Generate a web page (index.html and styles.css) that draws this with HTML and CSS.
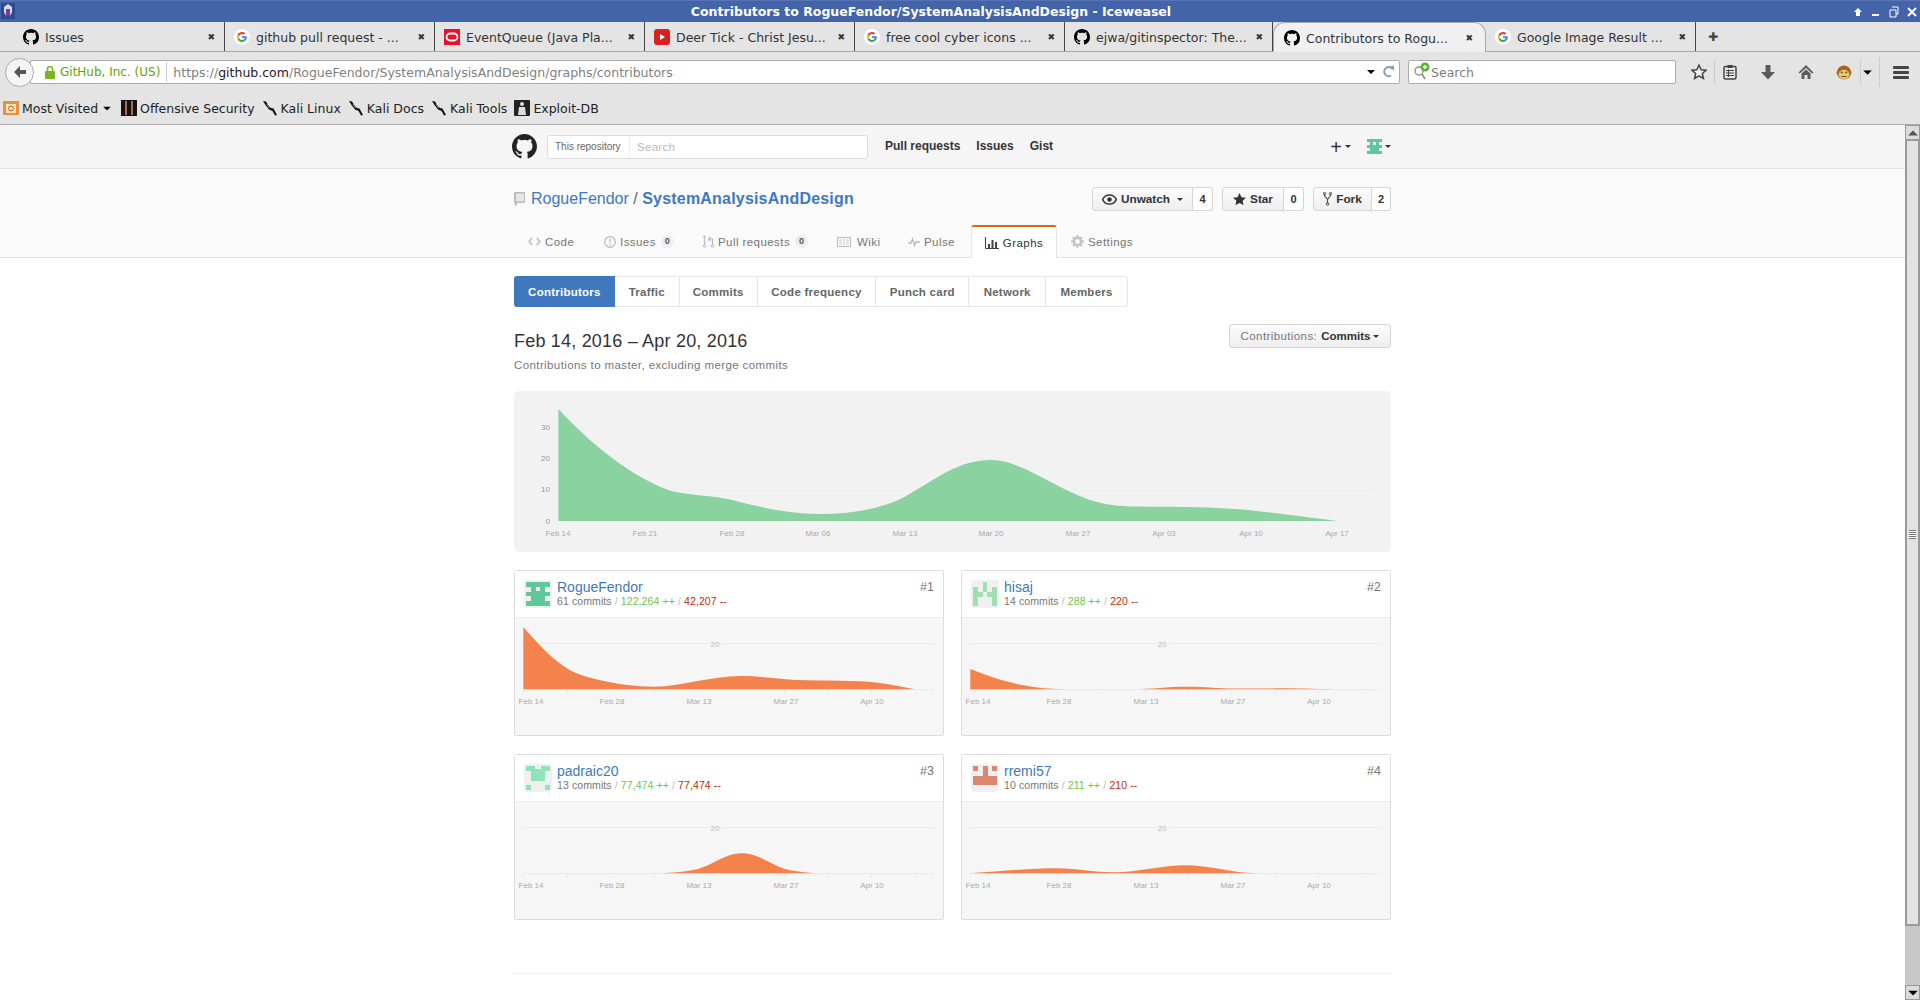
FILE: index.html
```html
<!DOCTYPE html>
<html lang="en">
<head>
  <meta charset="UTF-8">
  <title>Contributors to RogueFendor/SystemAnalysisAndDesign</title>
  <link rel="stylesheet" href="styles.css">
</head>
<body>
  <svg class="defs" width="0" height="0">
    <symbol id="gh" viewBox="0 0 16 16"><path d="M8 0C3.58 0 0 3.58 0 8c0 3.54 2.29 6.53 5.47 7.59.4.07.55-.17.55-.38 0-.19-.01-.82-.01-1.49-2.01.37-2.53-.49-2.69-.94-.09-.23-.48-.94-.82-1.13-.28-.15-.68-.52-.01-.53.63-.01 1.08.58 1.23.82.72 1.21 1.87.87 2.33.66.07-.52.28-.87.51-1.07-1.78-.2-3.64-.89-3.64-3.95 0-.87.31-1.59.82-2.15-.08-.2-.36-1.02.08-2.12 0 0 .67-.21 2.2.82.64-.18 1.32-.27 2-.27.68 0 1.36.09 2 .27 1.53-1.04 2.2-.82 2.2-.82.44 1.1.16 1.92.08 2.12.51.56.82 1.27.82 2.15 0 3.07-1.87 3.75-3.65 3.95.29.25.54.73.54 1.48 0 1.07-.01 1.93-.01 2.2 0 .21.15.46.55.38A8.013 8.013 0 0016 8c0-4.42-3.58-8-8-8z"/></symbol>
    <symbol id="goog" viewBox="0 0 16 16">
      <circle cx="8" cy="8" r="8" fill="#fff"/>
      <path d="M12.8 8.2c0-.4 0-.7-.1-1H8v1.9h2.7c-.1.6-.5 1.200-1 1.500l1.600 1.200c.9-.9 1.500-2.100 1.500-3.600z" fill="#4285f4"/>
      <path d="M8 13c1.300 0 2.400-.4 3.300-1.200l-1.600-1.200c-.4.3-1 .5-1.700.5-1.300 0-2.400-.9-2.800-2L3.500 10.300C4.300 11.900 6 13 8 13z" fill="#34a853"/>
      <path d="M5.200 9.100c-.2-.7-.2-1.500 0-2.200L3.500 5.700c-.7 1.400-.7 3.200 0 4.600z" fill="#fbbc05"/>
      <path d="M8 5c.7 0 1.400.3 1.900.7l1.400-1.400C10.400 3.500 9.300 3 8 3 6 3 4.300 4.100 3.500 5.700l1.700 1.200C5.600 5.800 6.700 5 8 5z" fill="#ea4335"/>
    </symbol>
    <symbol id="kali" viewBox="0 0 16 16"><path d="M1 1l3 .5 2.500 4L9 8l2.500.5L15 15l-2 .5-2.500-4.500L7 9.500 3.500 5z" fill="#111"/><path d="M5 4l2.500 4" stroke="#999" fill="none"/></symbol>
    <symbol id="caret" viewBox="0 0 8 4"><path d="M0 0h8L4 4z"/></symbol>
  </svg>

  <!-- Window title -->
  <div class="titlebar">
    <svg class="title-icon" width="14" height="18" viewBox="0 0 14 18"><rect y="1" width="14" height="16" fill="#2f4a93"/><path d="M3 5l4-3 4 3v5l-2 4H5L3 10z" fill="#d9dcea"/><rect x="5" y="7" width="4" height="7" fill="#7a3b8f"/></svg>
    <span class="title-text">Contributors to RogueFendor/SystemAnalysisAndDesign - Iceweasel</span>
    <div class="win-btns">
      <svg width="10" height="10" viewBox="0 0 10 10"><path d="M5 1l4 4H7v4H3V5H1z" fill="#fff"/></svg>
      <svg width="10" height="10" viewBox="0 0 10 10"><rect x="1" y="7" width="7" height="2" fill="#fff"/></svg>
      <svg width="10" height="12" viewBox="0 0 10 12"><path d="M3 1h6v7H7M1 4h6v7H1z" fill="none" stroke="#fff"/></svg>
      <svg width="10" height="10" viewBox="0 0 10 10"><path d="M1 1l8 8M9 1l-8 8" stroke="#fff" stroke-width="2"/></svg>
    </div>
  </div>

  <!-- Browser tabs -->
  <div class="tabs">
    <div class="tab tab-first"><svg class="fav" viewBox="0 0 16 16"><use href="#gh"/></svg><span class="tab-label">Issues</span><span class="tab-x">✖</span></div>
    <div class="tab"><svg class="fav" viewBox="0 0 16 16"><use href="#goog"/></svg><span class="tab-label">github pull request - ...</span><span class="tab-x">✖</span></div>
    <div class="tab"><svg class="fav" viewBox="0 0 16 16"><rect width="16" height="16" fill="#e8102a"/><rect x="2.500" y="4.500" width="11" height="7" rx="3.500" fill="none" stroke="#fff" stroke-width="1.800"/></svg><span class="tab-label">EventQueue (Java Pla...</span><span class="tab-x">✖</span></div>
    <div class="tab"><svg class="fav" viewBox="0 0 16 16"><rect width="16" height="16" rx="3" fill="#d9201f"/><path d="M6 5l5 3-5 3z" fill="#fff"/></svg><span class="tab-label">Deer Tick - Christ Jesu...</span><span class="tab-x">✖</span></div>
    <div class="tab"><svg class="fav" viewBox="0 0 16 16"><use href="#goog"/></svg><span class="tab-label">free cool cyber icons ...</span><span class="tab-x">✖</span></div>
    <div class="tab tab-short"><svg class="fav" viewBox="0 0 16 16"><use href="#gh"/></svg><span class="tab-label">ejwa/gitinspector: The...</span><span class="tab-x">✖</span></div>
    <div class="tab tab-active"><svg class="fav" viewBox="0 0 16 16"><use href="#gh"/></svg><span class="tab-label">Contributors to Rogu...</span><span class="tab-x">✖</span></div>
    <div class="tab"><svg class="fav" viewBox="0 0 16 16"><use href="#goog"/></svg><span class="tab-label">Google Image Result ...</span><span class="tab-x">✖</span></div>
    <span class="tab-new">✚</span>
  </div>

  <!-- Navigation bar -->
  <div class="navbar">
    <div class="back"><svg width="16" height="16" viewBox="0 0 16 16"><path d="M8 2L2 8l6 6V10h6V6H8z" fill="#555"/></svg></div>
    <div class="urlbar">
      <svg class="lock" width="10" height="14" viewBox="0 0 10 14"><path d="M2.500 6V4a2.500 2.500 0 015 0v2" fill="none" stroke="#7ab51d" stroke-width="1.500"/><rect y="6" width="10" height="8" rx="1" fill="#7ab51d"/></svg>
      <span class="url-id">GitHub, Inc. (US)</span>
      <span class="url-text">https://<b>github.com</b>/RogueFendor/SystemAnalysisAndDesign/graphs/contributors</span>
      <svg class="url-caret" width="8" height="6" viewBox="0 0 8 4"><use href="#caret"/></svg>
      <svg width="12" height="14" viewBox="0 0 12 14"><path d="M9.500 4A4.500 4.500 0 108 10.500" fill="none" stroke="#8b9bb0" stroke-width="2"/><path d="M7 1h4v5z" fill="#8b9bb0"/></svg>
    </div>
    <div class="searchbar">
      <svg width="18" height="20" viewBox="0 0 18 20"><circle cx="6" cy="9" r="4" fill="none" stroke="#888" stroke-width="1.300"/><path d="M9 12l3 5" stroke="#888" stroke-width="1.500"/><circle cx="12" cy="5" r="4.500" fill="#5cb531"/><path d="M12 3v4M10 5h4" stroke="#fff" stroke-width="1.300"/></svg>
      <span>Search</span>
    </div>
    <div class="nav-icons">
      <svg class="ni-star" width="16" height="18" viewBox="0 0 16 16"><path d="M8 1l2.100 4.700 5 .5-3.800 3.300 1.100 5L8 11.900 3.600 14.500l1.100-5L.9 6.200l5-.5z" fill="#f2f2f2" stroke="#444" stroke-width="1.500"/></svg>
      <span class="ni-sep ni-sep-1"></span>
      <svg class="ni-clip" width="14" height="16" viewBox="0 0 14 16"><rect x="1" y="2.500" width="12" height="12.500" rx="1.500" fill="#e8e8e8" stroke="#444" stroke-width="1.500"/><rect x="4.500" y="1" width="5" height="3" fill="#444"/><path d="M3 6.500h8M3 9h8M3 11.500h8M5.500 5.500v7.500" stroke="#444" stroke-width="1.100"/></svg>
      <svg class="ni-down" width="14" height="16" viewBox="0 0 14 16"><path d="M4.500 1h5v7H14l-7 7.500L0 8h4.500z" fill="#5c5c5c"/></svg>
      <svg class="ni-home" width="16" height="16" viewBox="0 0 16 16"><path d="M8 1L.5 8.500l1.300 1L8 4l6.200 5.500 1.300-1z" fill="#5c5c5c"/><path d="M3.500 9.500L8 5.500l4.500 4V15H9.500v-4h-3v4h-3z" fill="#5c5c5c"/></svg>
      <svg class="ni-monkey" width="16" height="16" viewBox="0 0 16 16"><circle cx="1.800" cy="9" r="1.800" fill="#e0a050"/><circle cx="14.200" cy="9" r="1.800" fill="#e0a050"/><circle cx="8" cy="8.500" r="7" fill="#a8641f"/><ellipse cx="8" cy="10.500" rx="5.300" ry="4.700" fill="#f2c274"/><circle cx="5.800" cy="8.500" r="1.100" fill="#4d7a2a"/><circle cx="10.200" cy="8.500" r="1.100" fill="#4d7a2a"/><path d="M5.500 12.500h5" stroke="#6a4314"/></svg>
      <span class="ni-sep ni-sep-2"></span>
      <svg class="ni-caret" width="9" height="5" viewBox="0 0 8 4"><use href="#caret"/></svg>
      <span class="ni-sep ni-sep-3"></span>
      <svg class="ni-menu" width="16" height="13" viewBox="0 0 16 13"><rect width="16" height="3" rx="1" fill="#444"/><rect y="5" width="16" height="3" rx="1" fill="#444"/><rect y="10" width="16" height="3" rx="1" fill="#444"/></svg>
    </div>
  </div>

  <!-- Bookmarks -->
  <div class="bookmarks">
    <span class="bm"><svg class="bm-icon" viewBox="0 0 16 16"><rect y="1" width="16" height="14" fill="#e8913a"/><rect x="3" y="4" width="10" height="9" fill="#fbe3bf"/><circle cx="8" cy="8.500" r="2.500" fill="none" stroke="#b5651d"/></svg>Most Visited<svg class="bm-caret" width="8" height="5" viewBox="0 0 8 4"><use href="#caret"/></svg></span>
    <span class="bm"><svg class="bm-icon" viewBox="0 0 16 16"><rect width="16" height="16" fill="#1a1210"/><path d="M5 1v14M11 1v14" stroke="#a0705a" stroke-width="2"/></svg>Offensive Security</span>
    <span class="bm"><svg class="bm-icon" viewBox="0 0 16 16"><use href="#kali"/></svg>Kali Linux</span>
    <span class="bm"><svg class="bm-icon" viewBox="0 0 16 16"><use href="#kali"/></svg>Kali Docs</span>
    <span class="bm"><svg class="bm-icon" viewBox="0 0 16 16"><use href="#kali"/></svg>Kali Tools</span>
    <span class="bm"><svg class="bm-icon" viewBox="0 0 16 16"><rect width="16" height="16" rx="1" fill="#222"/><circle cx="8" cy="4" r="2" fill="#ddd"/><path d="M5 7h6l1 8H4z" fill="#ddd"/></svg>Exploit-DB</span>
  </div>

  <div class="viewport">
    <div class="page">
      <!-- GitHub header -->
      <header class="gh-header">
        <div class="wrap gh-row">
          <svg class="gh-logo" viewBox="0 0 16 16"><use href="#gh"/></svg>
          <div class="gh-search"><span class="gh-scope">This repository</span><span class="gh-ph">Search</span></div>
          <nav class="gh-nav"><a>Pull requests</a><a>Issues</a><a>Gist</a></nav>
          <div class="gh-user">
            <span class="gh-plus">+</span><svg class="mini-caret" width="6" height="3" viewBox="0 0 8 4"><use href="#caret"/></svg>
            <svg class="gh-ava" width="16" height="15" viewBox="0 0 5 5" shape-rendering="crispEdges"><path d="M0 0h5v1H4v1h1v1H4v1h1v1H0V4h1V3H0V2h1V1H0z" fill="#5fc79b"/><rect x="2" y="1" width="1" height="1" fill="#f0f0f0"/></svg>
            <svg class="mini-caret" width="6" height="3" viewBox="0 0 8 4"><use href="#caret"/></svg>
          </div>
        </div>
      </header>

      <!-- Repository head -->
      <div class="repohead">
        <div class="wrap">
          <div class="repo-row">
            <h1 class="repo-title">
              <svg class="repo-icon" width="11" height="14" viewBox="0 0 11 14"><path d="M1 0h10v11H3v3l-1-1-1 1v-3H0V1z" fill="#bbb"/><rect x="2" y="1.500" width="8" height="8" fill="#e6e6e6"/></svg>
              <a>RogueFendor</a><span class="slash"> / </span><a class="repo-name">SystemAnalysisAndDesign</a>
            </h1>
            <div class="repo-actions">
              <span class="btn-group"><span class="rbtn rbtn-w"><svg width="15" height="11" viewBox="0 0 16 12"><path d="M8 1C4 1 1.500 4 .5 6c1 2 3.500 5 7.500 5s6.500-3 7.500-5C14.500 4 12 1 8 1z" fill="none" stroke="#333" stroke-width="1.600"/><circle cx="8" cy="6" r="2.500" fill="#333"/></svg>Unwatch<svg class="mini-caret" width="6" height="3" viewBox="0 0 8 4"><use href="#caret"/></svg></span><span class="rcount rcount-w">4</span></span>
              <span class="btn-group"><span class="rbtn rbtn-s"><svg width="13" height="12" viewBox="0 0 14 13"><path d="M7 0l2.100 4.500 4.900.6-3.600 3.300 1 4.800L7 10.800 2.600 13.200l1-4.800L0 5.100l4.900-.6z" fill="#333"/></svg>Star</span><span class="rcount rcount-s">0</span></span>
              <span class="btn-group"><span class="rbtn rbtn-f"><svg width="9" height="14" viewBox="0 0 9 14"><path d="M1.500 1.500v2l3 4v4M7.500 1.500v2l-3 4" fill="none" stroke="#555" stroke-width="1.200"/><circle cx="1.500" cy="1.500" r="1.200" fill="none" stroke="#555"/><circle cx="7.500" cy="1.500" r="1.200" fill="none" stroke="#555"/><circle cx="4.500" cy="12" r="1.300" fill="none" stroke="#555"/></svg>Fork</span><span class="rcount rcount-f">2</span></span>
            </div>
          </div>
          <nav class="repo-tabs">
            <a class="rt rt-code"><svg width="13" height="9" viewBox="0 0 14 10"><path d="M4.500 1L1 5l3.500 4M9.500 1L13 5 9.500 9" fill="none" stroke="#bbb" stroke-width="1.600"/></svg>Code</a>
            <a class="rt rt-issues"><svg width="12" height="12" viewBox="0 0 12 12"><circle cx="6" cy="6" r="5.300" fill="none" stroke="#bbb" stroke-width="1.200"/><path d="M6 2.800v4M6 8v1.400" stroke="#bbb" stroke-width="1.300"/></svg>Issues<span class="badge">0</span></a>
            <a class="rt rt-pulls"><svg width="11" height="13" viewBox="0 0 11 13"><path d="M1.500 3v7M9.500 10V4H6M7.500 2L5.500 4l2 2" fill="none" stroke="#bbb" stroke-width="1.200"/><circle cx="1.500" cy="1.800" r="1.200" fill="#bbb"/><circle cx="1.500" cy="11" r="1.200" fill="none" stroke="#bbb"/><circle cx="9.500" cy="11" r="1.200" fill="none" stroke="#bbb"/></svg>Pull requests<span class="badge">0</span></a>
            <a class="rt rt-wiki"><svg width="14" height="10" viewBox="0 0 14 10"><rect x=".5" y=".5" width="13" height="9" fill="none" stroke="#bbb"/><path d="M7 .5v9M2 3h3M2 5h3M2 7h3M9 3h3M9 5h3M9 7h3" stroke="#ccc"/></svg>Wiki</a>
            <a class="rt rt-pulse"><svg width="12" height="10" viewBox="0 0 12 10"><path d="M0 6h3l1.500-4L6.500 8.500 8 5h4" fill="none" stroke="#bbb" stroke-width="1.300"/></svg>Pulse</a>
            <a class="rt rt-graphs rt-active"><svg width="14" height="12" viewBox="0 0 14 12"><path d="M.5 0v11.500H14" fill="none" stroke="#444"/><path d="M3 7h2v4H3zM6.500 3h2v8h-2zM10 5h2v6h-2z" fill="#444"/></svg>Graphs</a>
            <a class="rt rt-settings"><svg width="13" height="13" viewBox="0 0 13 13"><circle cx="6.500" cy="6.500" r="3.700" fill="none" stroke="#c4c4c4" stroke-width="2.600"/><path d="M6.500 0v3M6.500 10v3M0 6.500h3M10 6.500h3M2 2l2 2M9 9l2 2M11 2L9 4M4 9l-2 2" stroke="#c4c4c4" stroke-width="1.800"/></svg>Settings</a>
          </nav>
        </div>
      </div>

      <main class="wrap">
        <div class="subnav">
          <a class="sub sub-on sub-1">Contributors</a><a class="sub sub-2">Traffic</a><a class="sub sub-3">Commits</a><a class="sub sub-4">Code frequency</a><a class="sub sub-5">Punch card</a><a class="sub sub-6">Network</a><a class="sub sub-7">Members</a>
        </div>

        <div class="range-row">
          <div>
            <h2 class="range">Feb 14, 2016 – Apr 20, 2016</h2>
            <p class="range-sub">Contributions to master, excluding merge commits</p>
          </div>
          <div class="range-btn"><span class="range-lbl">Contributions:</span><b>Commits</b><svg class="mini-caret" width="6" height="3" viewBox="0 0 8 4"><use href="#caret"/></svg></div>
        </div>

        <!-- Overall chart -->
        <div class="chart-main">
          <svg width="877" height="161" viewBox="0 0 877 161">
            <g class="grid"><path d="M44 37h815M44 68h815M44 99h815M44 130h815"/></g>
            <g class="axis-y"><text x="36" y="39">30</text><text x="36" y="70">20</text><text x="36" y="101">10</text><text x="36" y="133">0</text></g>
            <path class="area-green" d="M44.400 130V18C72 48 110 80 146 95.700C165 105 195 103 218.300 109C245 116 275 123 304.400 123C335 123 365 119 391 105.700C425 86 445 69 477.200 69C510 69 545 102 588 112.300C605 116.500 630 115.500 650 115.700C680 116 710 116.500 736 119.300C765 122.500 800 127 822.800 130Z"/>
            <g class="axis-x">
              <text x="44" y="144.500">Feb 14</text><text x="131" y="144.500">Feb 21</text><text x="218" y="144.500">Feb 28</text><text x="304" y="144.500">Mar 06</text><text x="391" y="144.500">Mar 13</text><text x="477" y="144.500">Mar 20</text><text x="564" y="144.500">Mar 27</text><text x="650" y="144.500">Apr 03</text><text x="737" y="144.500">Apr 10</text><text x="823" y="144.500">Apr 17</text>
            </g>
          </svg>
        </div>

        <!-- Contributors -->
        <div class="people">
          <section class="person">
            <div class="person-head">
              <svg class="ava" viewBox="0 0 28 28" shape-rendering="crispEdges"><rect width="28" height="28" fill="#f0f0f0"/><path d="M2 2h24v5h-5v5h5v4h-5v5h5v5H2v-5h5v-5H2v-4h5V7H2z" fill="#5fc79b"/><rect x="12" y="7" width="4" height="4" fill="#f0f0f0"/></svg>
              <div class="person-info">
                <a class="person-name">RogueFendor</a>
                <div class="person-stat">61 commits <i>/</i> <span class="add">122,264 ++</span> <i>/</i> <span class="del">42,207 --</span></div>
              </div>
              <span class="rank">#1</span>
            </div>
            <svg class="mini" width="428" height="117" viewBox="0 0 428 117">
              <path class="mini-grid" d="M8 25.500H419M8 71.500H419M8.500 71V76M52.500 71V76M95.500 71V76M139.500 71V76M183.500 71V76M226.500 71V76M269.500 71V76M313.500 71V76M356.500 71V76M400.500 71V76"/>
              <rect x="193" y="20" width="14" height="10" fill="#f6f6f6"/>
              <text class="mini-20" x="200" y="28.500">20</text>
              <g class="mini-x"><text x="16" y="86">Feb 14</text><text x="97" y="86">Feb 28</text><text x="184" y="86">Mar 13</text><text x="271" y="86">Mar 27</text><text x="357" y="86">Apr 10</text></g>
              <path class="area-orange" d="M8.300 71.300V9.300C27 30 42 47 62 55.500C80 62 110 68.700 140 68.700C165 68.700 195 58 226.700 58C245 58 260 61 280 62C310 63 340 62 363 64.700C378 66.500 390 69.500 400 71.300Z"/>
            </svg>
          </section>
          <section class="person">
            <div class="person-head">
              <svg class="ava" viewBox="0 0 28 28" shape-rendering="crispEdges"><rect width="28" height="28" fill="#f0f0f0"/><path d="M2 7h5v5h5V2h4v10h5V7h5v19h-5V17h-5v-5h-4v5H7v9H2z" fill="#a0dfb0"/></svg>
              <div class="person-info">
                <a class="person-name">hisaj</a>
                <div class="person-stat">14 commits <i>/</i> <span class="add">288 ++</span> <i>/</i> <span class="del">220 --</span></div>
              </div>
              <span class="rank">#2</span>
            </div>
            <svg class="mini" width="428" height="117" viewBox="0 0 428 117">
              <path class="mini-grid" d="M8 25.500H419M8 71.500H419M8.500 71V76M52.500 71V76M95.500 71V76M139.500 71V76M183.500 71V76M226.500 71V76M269.500 71V76M313.500 71V76M356.500 71V76M400.500 71V76"/>
              <rect x="193" y="20" width="14" height="10" fill="#f6f6f6"/>
              <text class="mini-20" x="200" y="28.500">20</text>
              <g class="mini-x"><text x="16" y="86">Feb 14</text><text x="97" y="86">Feb 28</text><text x="184" y="86">Mar 13</text><text x="271" y="86">Mar 27</text><text x="357" y="86">Apr 10</text></g>
              <path class="area-orange" d="M8.300 71.300V51C25 58 45 64 60 67C75 70 90 71 105 71.300L170 71.300C190 71 205 68.700 226 68.700C245 68.700 255 70.600 275 70.600C295 70.600 310 70.300 325 70.300C340 70.300 360 71.200 380 71.300Z"/>
            </svg>
          </section>
          <section class="person">
            <div class="person-head">
              <svg class="ava" viewBox="0 0 28 28" shape-rendering="crispEdges"><rect width="28" height="28" fill="#f0f0f0"/><path d="M2 2h9v3h6V2h9v5h-5v10H7V7H2z" fill="#8fe3b8"/><rect x="2" y="21" width="5" height="5" fill="#8fe3b8"/><rect x="21" y="21" width="5" height="5" fill="#8fe3b8"/></svg>
              <div class="person-info">
                <a class="person-name">padraic20</a>
                <div class="person-stat">13 commits <i>/</i> <span class="add">77,474 ++</span> <i>/</i> <span class="del">77,474 --</span></div>
              </div>
              <span class="rank">#3</span>
            </div>
            <svg class="mini" width="428" height="117" viewBox="0 0 428 117">
              <path class="mini-grid" d="M8 25.500H419M8 71.500H419M8.500 71V76M52.500 71V76M95.500 71V76M139.500 71V76M183.500 71V76M226.500 71V76M269.500 71V76M313.500 71V76M356.500 71V76M400.500 71V76"/>
              <rect x="193" y="20" width="14" height="10" fill="#f6f6f6"/>
              <text class="mini-20" x="200" y="28.500">20</text>
              <g class="mini-x"><text x="16" y="86">Feb 14</text><text x="97" y="86">Feb 28</text><text x="184" y="86">Mar 13</text><text x="271" y="86">Mar 27</text><text x="357" y="86">Apr 10</text></g>
              <path class="area-orange" d="M140 71.300C160 71 170 69.500 183 67C200 62 210 51.300 226.700 51.300C243 51.300 255 62 270 67C282 70 295 71 305 71.300Z"/>
            </svg>
          </section>
          <section class="person">
            <div class="person-head">
              <svg class="ava" viewBox="0 0 28 28" shape-rendering="crispEdges"><rect width="28" height="28" fill="#f0f0f0"/><path d="M2 2h5v5H2zM21 2h5v5h-5zM12 2h5v10h9v9H2v-9h10z" fill="#dc8672"/></svg>
              <div class="person-info">
                <a class="person-name">rremi57</a>
                <div class="person-stat">10 commits <i>/</i> <span class="add">211 ++</span> <i>/</i> <span class="del">210 --</span></div>
              </div>
              <span class="rank">#4</span>
            </div>
            <svg class="mini" width="428" height="117" viewBox="0 0 428 117">
              <path class="mini-grid" d="M8 25.500H419M8 71.500H419M8.500 71V76M52.500 71V76M95.500 71V76M139.500 71V76M183.500 71V76M226.500 71V76M269.500 71V76M313.500 71V76M356.500 71V76M400.500 71V76"/>
              <rect x="193" y="20" width="14" height="10" fill="#f6f6f6"/>
              <text class="mini-20" x="200" y="28.500">20</text>
              <g class="mini-x"><text x="16" y="86">Feb 14</text><text x="97" y="86">Feb 28</text><text x="184" y="86">Mar 13</text><text x="271" y="86">Mar 27</text><text x="357" y="86">Apr 10</text></g>
              <path class="area-orange" d="M8.300 71.300C40 69 70 66.300 95 66.300C115 66.300 130 70.300 152 70.300C175 70.300 200 63.300 224 63.300C245 63.300 262 69 285 70.800C295 71.200 305 71.300 312 71.300Z"/>
            </svg>
          </section>
        </div>

        <div class="foot-line"></div>
      </main>
    </div>

    <div class="scrollbar">
      <div class="sb-btn"><svg width="10" height="6" viewBox="0 0 8 4"><path d="M0 4h8L4 0z" fill="#555"/></svg></div>
      <div class="sb-thumb"><span class="sb-grip"></span></div>
      <div class="sb-track"></div>
      <div class="sb-btn sb-btn-down"><svg width="10" height="6" viewBox="0 0 8 4"><use href="#caret"/></svg></div>
    </div>
  </div>
</body>
</html>
```

FILE: styles.css
```css
html, body {
  margin: 0;
  padding: 0;
  height: 1000px;
  overflow: hidden;
}

body {
  font-family: "Liberation Sans", Arial, sans-serif;
  font-size: 12px;
  color: #333;
  background-color: white;
}

.defs {
  position: absolute;
}

a {
  text-decoration: none;
}

/* Browser chrome */
.titlebar {
  height: 22px;
  display: flex;
  align-items: center;
  justify-content: center;
  position: relative;
  padding-right: 58px;
  background-color: #4464a9;
  border-top: 1px solid #5874b4;
  box-sizing: border-box;
  color: white;
  font-family: "DejaVu Sans", sans-serif;
  font-size: 12.500px;
  font-weight: bold;
}

.title-icon {
  position: absolute;
  left: 1px;
  top: 1px;
}

.win-btns {
  position: absolute;
  right: 3px;
  top: 5px;
  display: flex;
  gap: 8px;
  align-items: center;
}

.tabs {
  height: 30px;
  box-sizing: border-box;
  display: flex;
  background-color: #e4e4e4;
  border-bottom: 1px solid #a8a8a8;
  font-family: "DejaVu Sans", sans-serif;
  font-size: 12.500px;
  color: #333;
}

.tab {
  width: 210px;
  box-sizing: border-box;
  display: flex;
  align-items: center;
  padding: 1px 9px 0 9px;
  border-right: 1px solid #444;
  flex-shrink: 0;
}

.tab-first {
  width: 225px;
  padding-left: 23px;
}

.tab-short {
  width: 208px;
}

.tab-active {
  width: 213px;
  padding-left: 10px;
  padding-right: 12px;
  background-color: #f0f0f0;
  border: 1px solid #a8a8a8;
  border-bottom: none;
  border-radius: 12px 12px 0 0;
  height: 30px;
}

.fav {
  width: 16px;
  height: 16px;
  flex-shrink: 0;
  margin-right: 6px;
}

.tab-label {
  flex: 1;
  white-space: nowrap;
  overflow: hidden;
}

.tab-x {
  font-size: 9px;
  color: #333;
}

.tab-new {
  margin-left: 12px;
  align-self: center;
  font-size: 12px;
  color: #444;
}

.navbar {
  height: 36px;
  box-sizing: border-box;
  display: flex;
  align-items: center;
  padding-top: 4px;
  background-color: #e4e4e4;
  position: relative;
  font-family: "DejaVu Sans", sans-serif;
  font-size: 12.500px;
}

.back {
  width: 29px;
  height: 29px;
  border-radius: 50%;
  margin-left: 5px;
  margin-right: -4px;
  background-color: #f4f4f4;
  border: 1px solid #aaa;
  box-sizing: border-box;
  display: flex;
  align-items: center;
  justify-content: center;
  position: relative;
  z-index: 1;
}

.urlbar, .searchbar {
  height: 24px;
  box-sizing: border-box;
  background-color: white;
  border: 1px solid #aaa;
  border-radius: 2px;
  display: flex;
  align-items: center;
}

.urlbar {
  width: 1370px;
  padding: 0 4px 0 14px;
}

.lock {
  margin-right: 5px;
}

.url-id {
  color: #5fa500;
  font-size: 12px;
  padding-right: 6px;
  border-right: 1px solid #ccc;
  margin-right: 6px;
  line-height: 20px;
}

.url-text {
  flex: 1;
  color: #808080;
}

.url-text b {
  font-weight: normal;
  color: #222;
}

.url-caret {
  margin-right: 8px;
}

.searchbar {
  width: 268px;
  margin-left: 8px;
  padding-left: 4px;
  color: #808080;
}

.nav-icons {
  display: flex;
  align-items: center;
  margin-left: 15px;
}

.ni-sep {
  width: 1px;
  height: 24px;
  background-color: #ccc;
}

.ni-sep-1 { margin-left: 7px; }
.ni-clip { margin-left: 8px; }
.ni-down { margin-left: 24px; }
.ni-home { margin-left: 23px; }
.ni-monkey { margin-left: 22px; }
.ni-sep-2 { margin-left: 8px; }
.ni-caret { margin-left: 2px; }
.ni-sep-3 { margin-left: 7px; height: 30px; }
.ni-menu { margin-left: 13px; }

.bookmarks {
  height: 37px;
  box-sizing: border-box;
  display: flex;
  align-items: center;
  gap: 7px;
  padding: 4px 0 0 3px;
  background-color: #e4e4e4;
  border-bottom: 1px solid #aaa;
  font-family: "DejaVu Sans", sans-serif;
  font-size: 12.500px;
  color: #222;
}

.bm {
  display: flex;
  align-items: center;
  gap: 3px;
}

.bm-icon {
  width: 16px;
  height: 16px;
}

.bm-caret {
  margin: 0 3px 0 2px;
}

.viewport {
  display: flex;
  height: 875px;
}

.page {
  width: 1905px;
  flex-shrink: 0;
  overflow: hidden;
}

.scrollbar {
  width: 15px;
  display: flex;
  flex-direction: column;
  background-color: #c8c8c8;
}

.sb-btn {
  height: 15px;
  box-sizing: border-box;
  background-color: #dcdcdc;
  border: 1px solid #999;
  display: flex;
  align-items: center;
  justify-content: center;
}

.sb-thumb {
  height: 786px;
  box-sizing: border-box;
  background-color: #e2e2e2;
  border: 1px solid #999;
  border-width: 1px 2px 2px 2px;
  position: relative;
}

.sb-grip {
  position: absolute;
  left: 2px;
  right: 2px;
  top: 389px;
  height: 9px;
  background: repeating-linear-gradient(#777 0 1px, #fff 1px 2px);
}

.sb-track {
  flex: 1;
}

/* GitHub page */
.wrap {
  width: 877px;
  margin: 0 auto;
}

.gh-header {
  height: 44px;
  box-sizing: border-box;
  background-color: #f5f5f5;
  border-bottom: 1px solid #e5e5e5;
}

.gh-row {
  display: flex;
  align-items: center;
  height: 43px;
}

.gh-logo {
  width: 25px;
  height: 25px;
  margin-left: -2px;
  fill: #222;
}

.gh-search {
  margin-left: 10px;
  width: 321px;
  height: 24px;
  box-sizing: border-box;
  display: flex;
  align-items: center;
  background-color: white;
  border: 1px solid #ddd;
  border-radius: 3px;
}

.gh-scope {
  width: 82px;
  box-sizing: border-box;
  padding-left: 7px;
  line-height: 22px;
  border-right: 1px solid #eee;
  font-size: 10px;
  color: #666;
}

.gh-ph {
  padding-left: 7px;
  font-size: 11.500px;
  letter-spacing: .3px;
  color: #bbb;
}

.gh-nav {
  margin-left: 17px;
  padding-bottom: 2px;
  display: flex;
  gap: 16px;
  font-size: 12px;
  font-weight: bold;
  color: #333;
}

.gh-user {
  margin-left: auto;
  display: flex;
  align-items: center;
}

.gh-plus {
  font-size: 20px;
  line-height: 20px;
  color: #333;
}

.gh-ava {
  margin-left: 15px;
}

.mini-caret {
  margin-left: 3px;
  fill: #333;
}

.repohead {
  height: 89px;
  box-sizing: border-box;
  padding-top: 18px;
  background-color: #fafafa;
  border-bottom: 1px solid #e5e5e5;
}

.repo-row {
  display: flex;
  justify-content: space-between;
  align-items: center;
  height: 24px;
}

.repo-title {
  margin: 0;
  font-size: 16px;
  font-weight: normal;
  display: flex;
  align-items: center;
  color: #666;
  white-space: pre;
}

.repo-title a {
  color: #4078c0;
}

.repo-title .repo-name {
  font-weight: bold;
  letter-spacing: .2px;
}

.repo-icon {
  margin-right: 6px;
}

.repo-actions {
  display: flex;
  gap: 9px;
}

.btn-group {
  display: flex;
  height: 24px;
  font-size: 11.800px;
  font-weight: bold;
}

.rbtn {
  box-sizing: border-box;
  display: flex;
  align-items: center;
  justify-content: center;
  gap: 4px;
  color: #333;
  background: linear-gradient(#fcfcfc, #eee);
  border: 1px solid #d5d5d5;
  border-radius: 3px 0 0 3px;
}

.rcount {
  box-sizing: border-box;
  display: flex;
  align-items: center;
  justify-content: center;
  background-color: white;
  border: 1px solid #d5d5d5;
  border-left: none;
  border-radius: 0 3px 3px 0;
  color: #333;
  font-size: 11px;
}

.rbtn-w { width: 101px; }
.rcount-w { width: 20px; }
.rbtn-s { width: 62px; }
.rcount-s { width: 20px; }
.rbtn-f { width: 59px; }
.rcount-f { width: 19px; }

.repo-tabs {
  display: flex;
  height: 33px;
  margin-top: 14px;
  font-size: 11.500px;
  letter-spacing: .43px;
  color: #767676;
}

.rt {
  display: flex;
  align-items: center;
  box-sizing: border-box;
  height: 33px;
  gap: 4px;
  color: #767676;
}

.rt-code { margin-left: 14px; width: 76px; }
.rt-issues { width: 99px; }
.rt-pulls { width: 134px; }
.rt-wiki { width: 71px; gap: 6px; }
.rt-pulse { width: 63px; }

.rt-active {
  width: 86px;
  justify-content: center;
  background-color: white;
  border: 1px solid #e5e5e5;
  border-top: 2px solid #d26911;
  border-bottom: none;
  border-radius: 3px 3px 0 0;
  color: #333;
  height: 33px;
  margin-bottom: -1px;
}

.rt-settings { margin-left: 14px; }

.badge {
  margin-left: 1px;
  padding: 0 4px;
  font-size: 9px;
  font-weight: bold;
  letter-spacing: 0;
  line-height: 13px;
  border-radius: 7px;
  background-color: #eee;
  color: #555;
}

.subnav {
  display: flex;
  margin-top: 18px;
  height: 31px;
  box-sizing: border-box;
  border: 1px solid #e5e5e5;
  border-radius: 3px;
  font-size: 11.500px;
  letter-spacing: .25px;
  font-weight: bold;
  width: 614px;
}

.sub {
  display: flex;
  align-items: center;
  justify-content: center;
  color: #666;
  border-right: 1px solid #e5e5e5;
  box-sizing: border-box;
}

.sub-on {
  background-color: #4078c0;
  color: white;
  margin: -1px 0 -1px -1px;
  border-radius: 3px 0 0 3px;
  border-right: none;
}

.sub-1 { width: 101px; }
.sub-2 { width: 65px; }
.sub-3 { width: 78px; }
.sub-4 { width: 119px; }
.sub-5 { width: 93px; }
.sub-6 { width: 77px; }
.sub-7 { width: 81px; border-right: none; }

.range-row {
  display: flex;
  justify-content: space-between;
  align-items: flex-start;
  margin-top: 17px;
  height: 67px;
}

.range {
  margin: 5px 0 0;
  font-size: 18px;
  letter-spacing: .2px;
  font-weight: normal;
  line-height: 24px;
  color: #333;
}

.range-sub {
  margin: 4px 0 0;
  font-size: 11.500px;
  letter-spacing: .4px;
  line-height: 16px;
  color: #767676;
}

.range-btn {
  width: 162px;
  height: 24px;
  box-sizing: border-box;
  display: flex;
  align-items: center;
  justify-content: center;
  font-size: 11.500px;
  color: #333;
  background: linear-gradient(#fcfcfc, #eee);
  border: 1px solid #d5d5d5;
  border-radius: 3px;
}

.range-lbl {
  color: #777;
  letter-spacing: .4px;
  margin-right: 4px;
}

.chart-main {
  height: 161px;
  background-color: #f2f2f2;
  border-radius: 5px;
}

.chart-main svg, .mini {
  display: block;
}

.grid path {
  stroke: #eee;
  fill: none;
}

.axis-y text {
  font-size: 8px;
  fill: #999;
  text-anchor: end;
}

.axis-x text {
  font-size: 8px;
  fill: #aaa;
  text-anchor: middle;
}

.area-green {
  fill: #8ad2a0;
}

.area-orange {
  fill: #f3824c;
}

.people {
  display: grid;
  grid-template-columns: 430px 430px;
  column-gap: 17px;
  row-gap: 18px;
  margin-top: 18px;
}

.person {
  height: 166px;
  box-sizing: border-box;
  border: 1px solid #ddd;
  border-radius: 2px;
  background-color: #f6f6f6;
}

.person-head {
  height: 47px;
  box-sizing: border-box;
  display: flex;
  padding: 9px 9px 0 9px;
  background-color: white;
  border-bottom: 1px solid #eee;
}

.ava {
  width: 28px;
  height: 28px;
  border-radius: 3px;
  flex-shrink: 0;
}

.person-info {
  margin-left: 5px;
  flex: 1;
}

.person-name {
  display: block;
  font-size: 14px;
  line-height: 15px;
  color: #4078c0;
}

.person-stat {
  font-size: 10.500px;
  letter-spacing: .1px;
  line-height: 13px;
  color: #767676;
}

.person-stat i {
  font-style: normal;
  color: #bbb;
}

.add {
  color: #6cc644;
}

.del {
  color: #bd2c00;
}

.rank {
  font-size: 12.500px;
  color: #767676;
}

.mini-grid {
  stroke: #eaeaea;
  fill: none;
}

.mini-20 {
  font-size: 8px;
  fill: #bbb;
  text-anchor: middle;
}

.mini-x text {
  font-size: 8px;
  fill: #aaa;
  text-anchor: middle;
}

.foot-line {
  margin-top: 53px;
  border-top: 1px solid #eee;
}
```
